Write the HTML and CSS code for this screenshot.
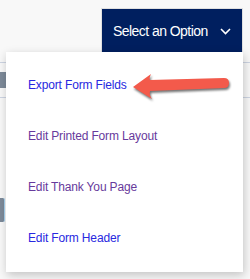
FILE: index.html
```html
<!DOCTYPE html>
<html lang="en">
<head>
    <meta charset="UTF-8">
    <meta name="viewport" content="width=device-width, initial-scale=1.0">
    <title>Select an Option</title>
    <link rel="stylesheet" href="styles.css">
</head>
<body>
    <div class="page">
        <div class="topbar">
            <button class="select-btn">
                <span class="select-label">Select an Option</span>
                <svg class="chevron" width="11" height="7" viewBox="0 0 11 7">
                    <path d="M1 1 L5.5 5.5 L10 1" fill="none" stroke="#fff" stroke-width="1.6"/>
                </svg>
            </button>
        </div>

        <!-- page content behind the open menu -->
        <div class="bg-content">
            <div class="bg-row">
                <div class="bg-chip"></div>
            </div>
            <div class="bg-row bg-row-low">
                <div class="bg-chip bg-chip-tall"></div>
            </div>
        </div>

        <div class="menu">
            <a href="#" class="menu-item">Export Form Fields</a>
            <a href="#" class="menu-item visited">Edit Printed Form Layout</a>
            <a href="#" class="menu-item visited">Edit Thank You Page</a>
            <a href="#" class="menu-item">Edit Form Header</a>
        </div>

        <svg class="pointer-arrow" width="106" height="34" viewBox="0 0 106 34">
            <path d="M5 17 L23 4 Q21 8 22 10 L96 8 Q101 8 101 13 Q101 18 96 18 L22 21 Q21 25 24 29 Z" fill="#f35a4b"/>
        </svg>
    </div>
</body>
</html>
```

FILE: styles.css
```css
body {
    margin: 0;
    background: #f8f8f8;
    font-family: "Liberation Sans", Arial, sans-serif;
}
.page {
    position: relative;
    width: 250px;
    height: 279px;
    overflow: hidden;
}
.topbar {
    display: flex;
    justify-content: flex-end;
    padding: 8px 7px 0 0;
}
.select-btn {
    box-sizing: border-box;
    width: 142px;
    height: 45px;
    display: flex;
    align-items: center;
    justify-content: space-between;
    padding: 0 11px 0 11px;
    background: #001f5f;
    border: 1px solid #e0e0e0;
    color: #fff;
    font-family: inherit;
    font-size: 14px;
    letter-spacing: -0.55px;
    cursor: pointer;
}
.chevron {
    margin-top: 1px;
}
.bg-content {
    padding-top: 9px;
}
.bg-row {
    height: 34px;
    border-top: 1px solid #cdd4e2;
    border-bottom: 1px solid #cdd4e2;
    display: flex;
    align-items: center;
}
.bg-row-low {
    margin-top: 95px;
    border: none;
}
.bg-chip {
    width: 7px;
    height: 16px;
    background: #7d8a99;
    border-right: 1px solid #d7b8a0;
    border-radius: 0 2px 2px 0;
}
.bg-chip-tall {
    width: 4px;
    height: 24px;
    border-right: 1px solid #a8d4f0;
}
.menu {
    position: absolute;
    top: 52px;
    left: 6px;
    width: 237px;
    padding: 8px 0;
    background: #fff;
    box-shadow: 1px 3px 9px rgba(0,0,0,0.22);
}
.menu-item {
    display: block;
    padding-left: 22px;
    line-height: 51px;
    font-size: 12px;
    letter-spacing: -0.15px;
    color: #2828e0;
    text-decoration: none;
}
.menu-item.visited {
    color: #673a9c;
}
.pointer-arrow {
    position: absolute;
    left: 128px;
    top: 70px;
    filter: drop-shadow(1px 2px 1px rgba(0,0,0,0.55));
}
```
